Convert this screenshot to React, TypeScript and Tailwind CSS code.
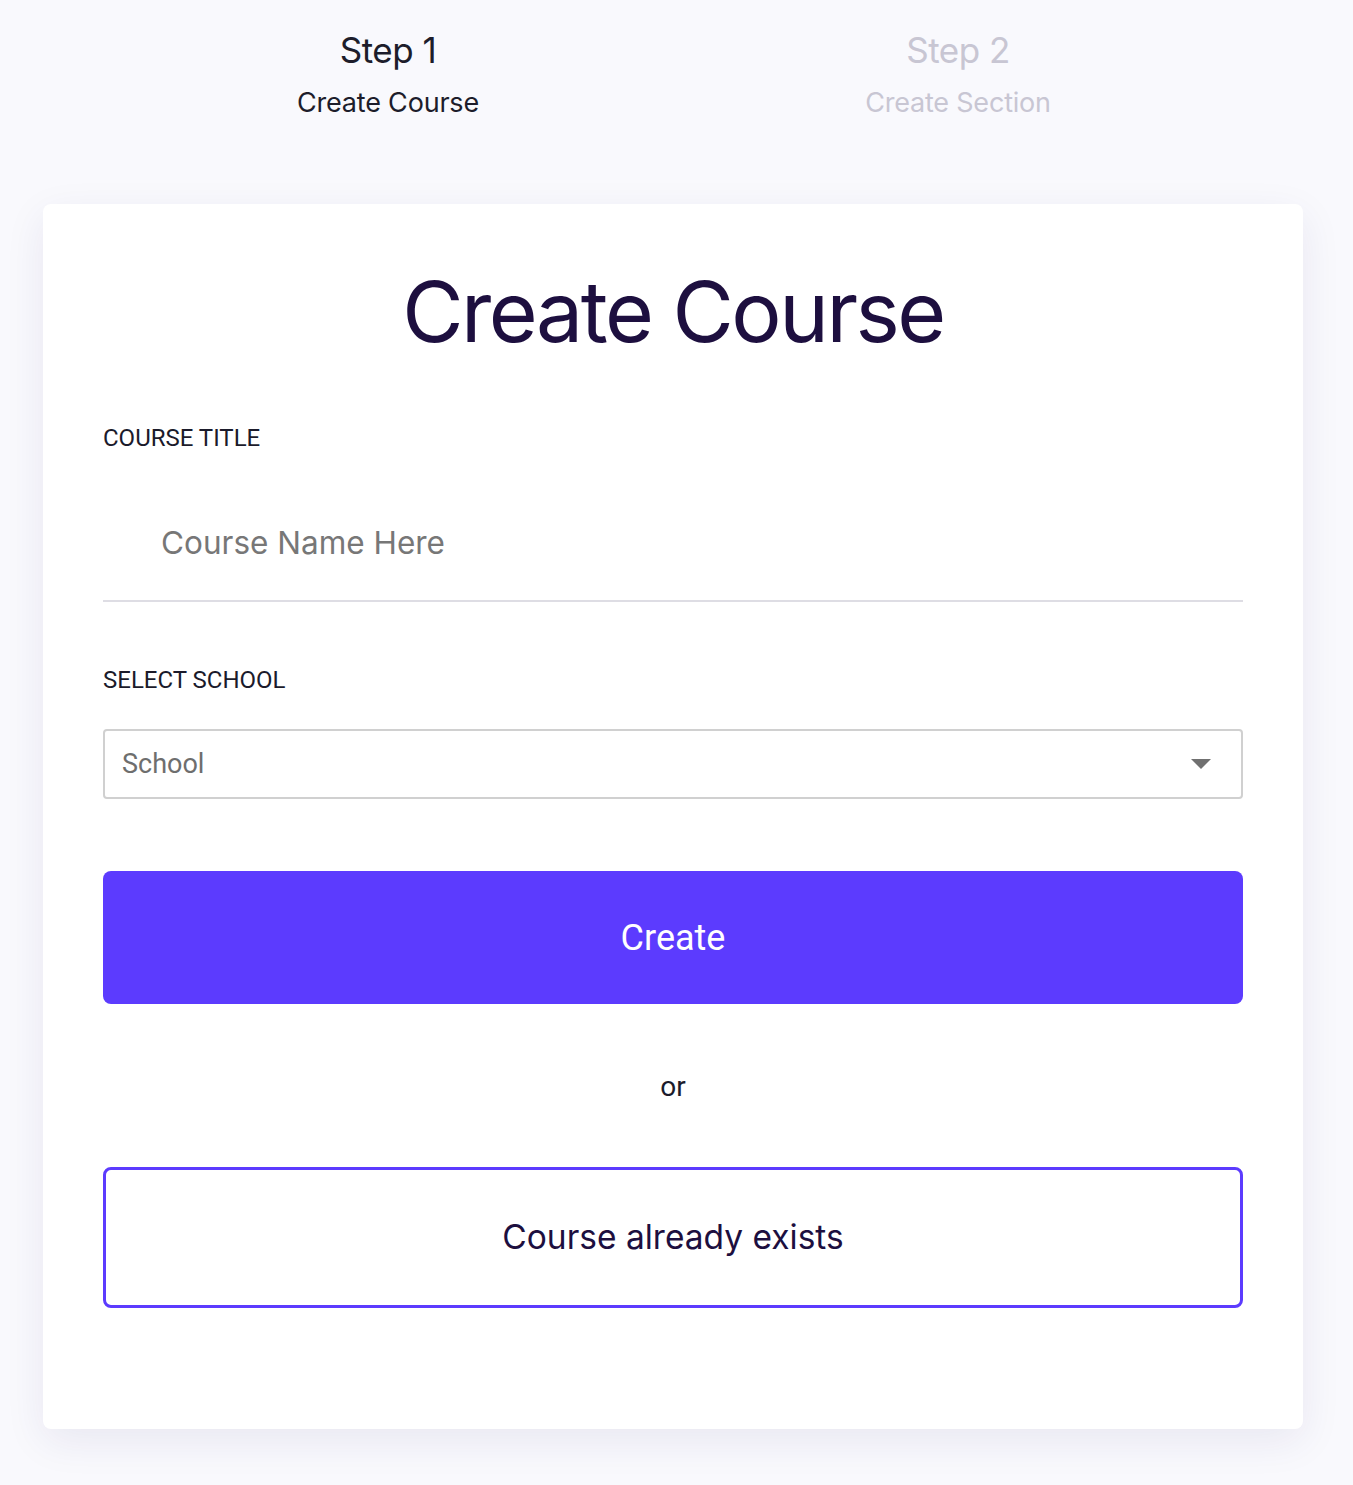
import React from "react";

const steps = [
  { step: "Step 1", label: "Create Course", active: true },
  { step: "Step 2", label: "Create Section", active: false },
];

const App = () => {
  return (
    <div className="min-h-[1485px] w-full bg-[#f9f9fd] font-['Inter',sans-serif]">
      {/* steps */}
      <div className="grid w-[1260px] grid-cols-2 px-[60px] ml-[43px] pt-[29px]">
        {steps.map((s) => (
          <div key={s.step} className="flex flex-col items-center">
            <p
              className={`h-[42px] leading-[42px] text-[35px] tracking-[-0.5px] ${
                s.active ? "text-[#1d1d2b]" : "text-[#c8c6d3]"
              }`}
            >
              {s.step}
            </p>
            <p
              className={`mt-[16px] h-[32px] leading-[32px] text-[27px] tracking-[-0.2px] ${
                s.active ? "text-[#1d1d2b]" : "text-[#c8c6d3]"
              }`}
            >
              {s.label}
            </p>
          </div>
        ))}
      </div>

      {/* card */}
      <div className="ml-[43px] mt-[85px] w-[1260px] rounded-[8px] bg-white px-[60px] pt-[58px] pb-[121px] shadow-[0_12px_40px_rgba(40,30,100,0.08)]">
        <h1 className="h-[100px] text-center text-[84px] leading-[100px] tracking-[-2.5px] text-[#1d0f3f]">
          Create Course
        </h1>

        <label className="mt-[64px] block h-[24px] font-['Roboto',sans-serif] text-[24px] leading-[24px] text-[#1b1b2b]">
          COURSE TITLE
        </label>
        <div className="mt-[38px] flex h-[114px] items-center border-b-2 border-[#dedde4] pb-[2px] pl-[58px]">
          <input
            className="w-full bg-transparent text-[31.5px] text-[#333] outline-none placeholder:text-[#777777]"
            placeholder="Course Name Here"
          />
        </div>

        <label className="mt-[66px] block h-[24px] font-['Roboto',sans-serif] text-[24px] leading-[24px] text-[#1b1b2b]">
          SELECT SCHOOL
        </label>
        <div className="mt-[37px] flex h-[70px] items-center justify-between rounded-[4px] border-2 border-[#d0d0d0] pl-[17px] pr-[30px]">
          <span className="font-['Roboto',sans-serif] text-[27px] text-[#6e6e6e]">School</span>
          <svg width="20" height="10" viewBox="0 0 20 10">
            <path d="M0 0 L20 0 L10 10 Z" fill="#707070" />
          </svg>
        </div>

        <button className="mt-[72px] flex h-[133px] w-full items-center justify-center rounded-[8px] bg-[#5c3bfe] font-['Roboto',sans-serif] text-[36px] text-white">
          Create
        </button>

        <p className="mt-[67px] h-[32px] text-center font-['Roboto',sans-serif] text-[28px] leading-[32px] text-[#1b1b2b]">
          or
        </p>

        <button className="mt-[64px] flex h-[141px] w-full items-center justify-center rounded-[8px] border-[3px] border-[#5c3bfe] bg-white text-[33.5px] text-[#1d0f3f]">
          Course already exists
        </button>
      </div>
    </div>
  );
};

export default App;
